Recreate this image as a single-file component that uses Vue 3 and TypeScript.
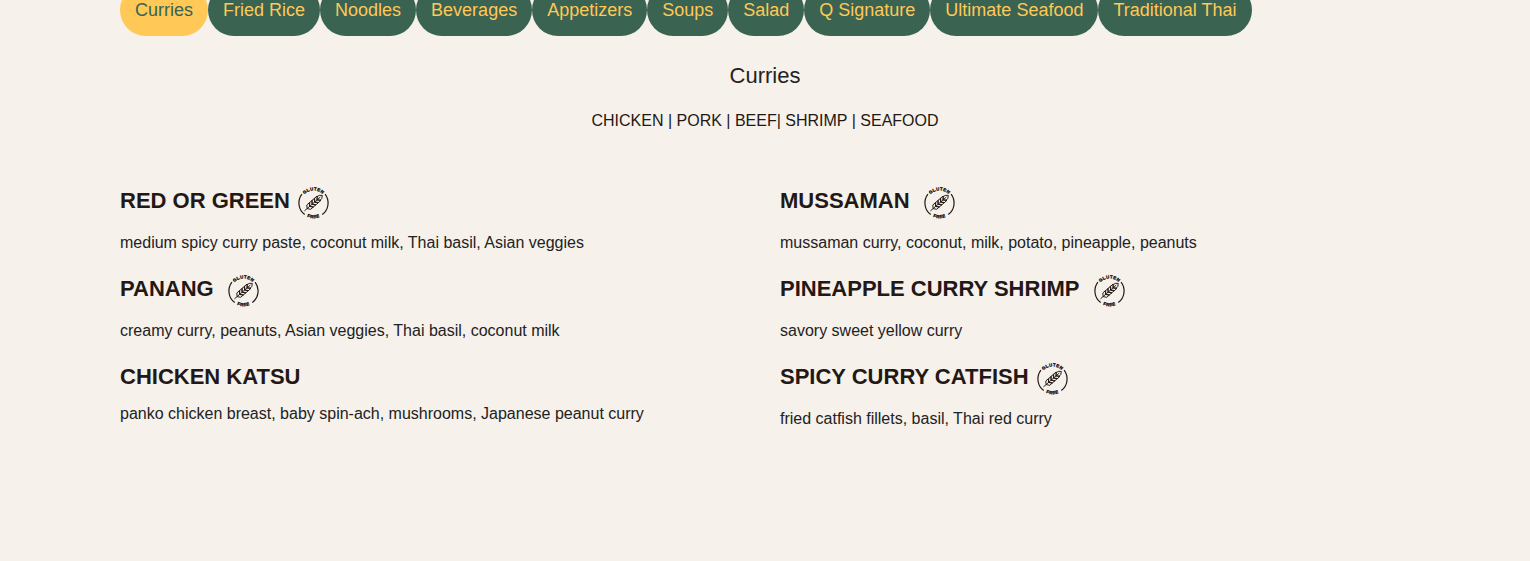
<template>
  <main class="menu">
    <nav class="tabs">
      <button
        v-for="tab in tabs"
        :key="tab"
        type="button"
        class="tab"
        :class="{ active: tab === current }"
        @click="current = tab"
      >
        {{ tab }}
      </button>
    </nav>

    <h2 class="heading">Curries</h2>
    <p class="proteins">CHICKEN | PORK | BEEF| SHRIMP | SEAFOOD</p>

    <div class="columns">
      <div v-for="(column, index) in columns" :key="index" class="column">
        <section
          v-for="dish in column"
          :key="dish.name"
          class="dish"
          :class="{ 'with-icon': dish.glutenFree }"
        >
          <h3 class="name">
            <span>{{ dish.name }}</span>
            <svg
              v-if="dish.glutenFree"
              class="gluten-free"
              :class="{ spaced: dish.spaced }"
              viewBox="0.5 0 34 34"
              role="img"
              aria-label="Gluten free"
            >
              <defs>
                <path id="arc-top" d="M4.4 17a12.6 12.6 0 0 1 25.2 0" />
                <path id="arc-bottom" d="M1.8 17a15.2 15.2 0 0 0 30.4 0" />
              </defs>
              <g class="ring">
                <path d="M5.4 8.2A14.5 14.5 0 0 0 8.2 28.6" />
                <path d="M28.6 8.2A14.5 14.5 0 0 1 25.8 28.6" />
              </g>
              <text class="top">
                <textPath href="#arc-top" startOffset="50%">GLUTEN</textPath>
              </text>
              <text class="bottom">
                <textPath href="#arc-bottom" startOffset="50%">FREE</textPath>
              </text>
              <g class="wheat" transform="rotate(49 17 17)">
                <path d="M17 29V8" />
                <path d="M17 5.4q-2.8 2.2-2.3 4.7l2.3 2.3l2.3-2.3q.5-2.5-2.3-4.7z" />
                <path
                  v-for="y in [9.6, 12.9, 16.2, 19.5]"
                  :key="y"
                  :d="`M17 ${y + 6}l-2.9-2.2v-3.8l2.9 2.6l2.9-2.6v3.8z`"
                />
              </g>
            </svg>
          </h3>
          <p class="description">{{ dish.description }}</p>
        </section>
      </div>
    </div>
  </main>
</template>

<script setup lang="ts">
import { ref } from "vue";

interface Dish {
  name: string;
  description: string;
  glutenFree?: boolean;
  spaced?: boolean;
}

const tabs: string[] = [
  "Curries",
  "Fried Rice",
  "Noodles",
  "Beverages",
  "Appetizers",
  "Soups",
  "Salad",
  "Q Signature",
  "Ultimate Seafood",
  "Traditional Thai",
];
const current = ref("Curries");

const columns: Dish[][] = [
  [
    {
      name: "RED OR GREEN",
      description: "medium spicy curry paste, coconut milk, Thai basil, Asian veggies",
      glutenFree: true,
    },
    {
      name: "PANANG",
      description: "creamy curry, peanuts, Asian veggies, Thai basil, coconut milk",
      glutenFree: true,
      spaced: true,
    },
    {
      name: "CHICKEN KATSU",
      description: "panko chicken breast, baby spin-ach, mushrooms, Japanese peanut curry",
    },
  ],
  [
    {
      name: "MUSSAMAN",
      description: "mussaman curry, coconut, milk, potato, pineapple, peanuts",
      glutenFree: true,
      spaced: true,
    },
    {
      name: "PINEAPPLE CURRY SHRIMP",
      description: "savory sweet yellow curry",
      glutenFree: true,
      spaced: true,
    },
    {
      name: "SPICY CURRY CATFISH",
      description: "fried catfish fillets, basil, Thai red curry",
      glutenFree: true,
    },
  ],
];
</script>

<style>
body {
  margin: 0;
  background: #f6f1eb;
}
</style>

<style scoped>
.menu {
  box-sizing: border-box;
  height: 561px;
  padding: 0 120px;
  overflow: hidden;
  background: #f6f1eb;
  color: #231815;
  font-family: "Liberation Sans", Arial, sans-serif;
  font-size: 16px;
}
.tabs {
  display: flex;
  margin-top: -16px;
}
.tab {
  height: 52px;
  padding: 0 15px;
  border: 0;
  border-radius: 26px;
  background: #3a6351;
  color: #ffc857;
  font-family: inherit;
  font-size: 18px;
  line-height: 52px;
  white-space: nowrap;
}
.tab.active {
  background: #ffc857;
  color: #3a6351;
}
.heading {
  margin: 24px 0 0;
  color: #222;
  font-size: 22px;
  font-weight: 400;
  line-height: 32px;
  text-align: center;
}
.proteins {
  margin: 16px 0 0;
  line-height: 26px;
  text-align: center;
}
.columns {
  display: grid;
  grid-template-columns: 1fr 1fr;
  gap: 30px;
  margin-top: 51px;
}
.dish {
  height: 88px;
}
.name {
  display: flex;
  align-items: flex-start;
  height: 41px;
  margin: 0;
  font-size: 22px;
  font-weight: 700;
  line-height: 32px;
}
.with-icon .name {
  height: 46px;
}
.description {
  margin: 0;
  color: #222;
  line-height: 24px;
}
.gluten-free {
  width: 34px;
  height: 34px;
  margin: 1px 0 0 7px;
  overflow: visible;
}
.gluten-free.spaced {
  margin-left: 13px;
}
.ring {
  fill: none;
  stroke: #231815;
  stroke-width: 1.2;
}
.gluten-free text {
  fill: #231815;
  stroke: #231815;
  stroke-width: 0.35;
  font-size: 4.4px;
  font-weight: 700;
  letter-spacing: 0.4px;
  text-anchor: middle;
}
.wheat {
  fill: none;
  stroke: #231815;
  stroke-width: 0.9;
  stroke-linejoin: round;
}
</style>
